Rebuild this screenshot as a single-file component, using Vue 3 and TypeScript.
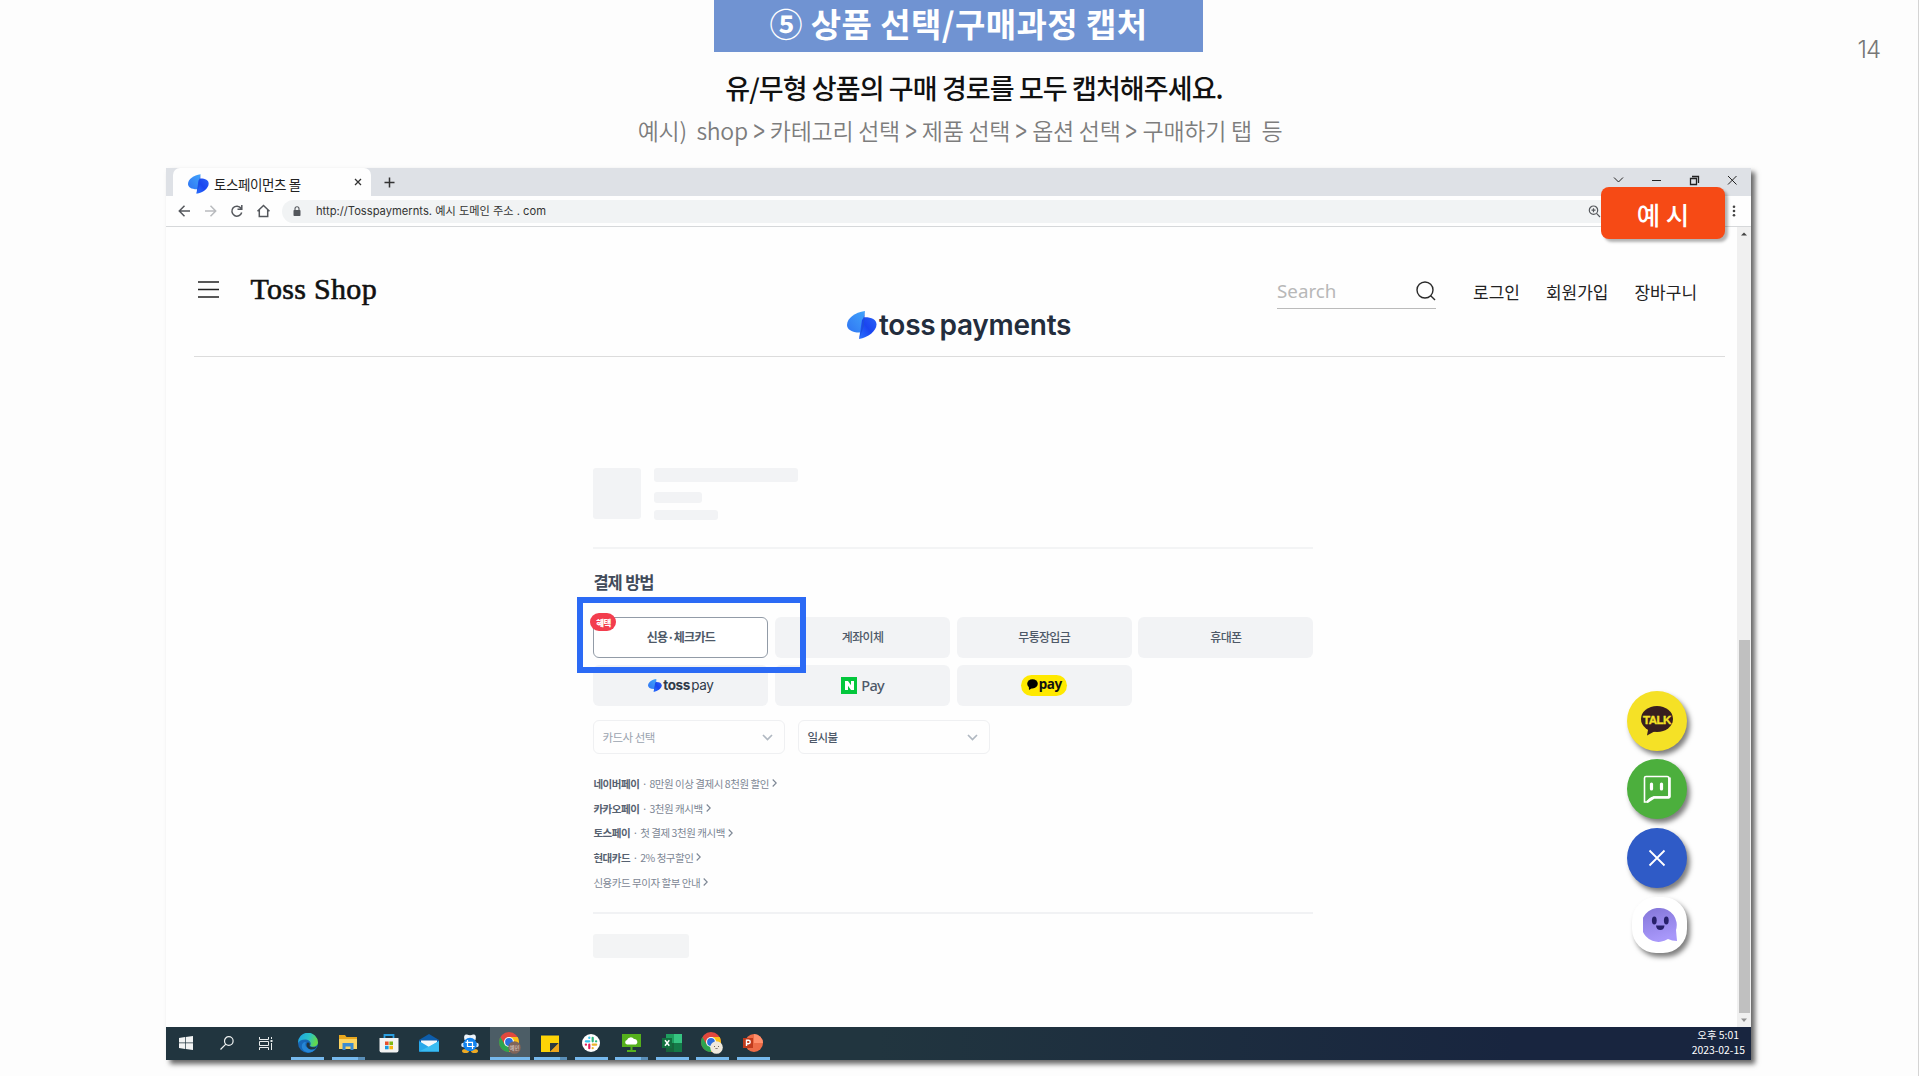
<script setup lang="ts">
interface Benefit {
  name: string
  text: string
}

interface TaskItem {
  id: string
  open?: boolean
  active?: boolean
  stacked?: boolean
}

const steps: string[] = ['카테고리 선택', '제품 선택', '옵션 선택', '구매하기 탭\u00a0 등']

const benefits: Benefit[] = [
  { name: '네이버페이', text: '8만원 이상 결제시 8천원 할인' },
  { name: '카카오페이', text: '3천원 캐시백' },
  { name: '토스페이', text: '첫 결제 3천원 캐시백' },
  { name: '현대카드', text: '2% 청구할인' },
  { name: '', text: '신용카드 무이자 할부 안내' },
]

const tasks: TaskItem[] = [
  { id: 'start' },
  { id: 'search' },
  { id: 'view' },
  { id: 'edge', open: true },
  { id: 'folder', open: true, stacked: true },
  { id: 'store' },
  { id: 'mail' },
  { id: 'capture' },
  { id: 'chrome-active', open: true, active: true },
  { id: 'notes', open: true, stacked: true },
  { id: 'slack', open: true },
  { id: 'cloud', open: true, stacked: true },
  { id: 'excel', open: true },
  { id: 'chrome', open: true },
  { id: 'ppt', open: true },
]
</script>

<template>
  <div class="slide">
    <svg class="defs" width="0" height="0">
      <defs>
        <linearGradient id="tl" x1="1" y1="0" x2="0" y2="1">
          <stop offset="0" stop-color="#41a4fb" />
          <stop offset="1" stop-color="#2f74f3" />
        </linearGradient>
        <linearGradient id="tr" x1="1" y1="0" x2="0" y2="1">
          <stop offset="0" stop-color="#2a62f6" />
          <stop offset="0.5" stop-color="#1a45f0" />
          <stop offset="1" stop-color="#2b74ff" />
        </linearGradient>
        <linearGradient id="edgeA" x1="0" y1="0" x2="1" y2="0.3">
          <stop offset="0" stop-color="#1d9fe8" />
          <stop offset="0.6" stop-color="#2bc3c4" />
          <stop offset="1" stop-color="#62d84e" />
        </linearGradient>
        <linearGradient id="buddy" x1="0" y1="0" x2="0.3" y2="1">
          <stop offset="0" stop-color="#8375d8" />
          <stop offset="1" stop-color="#a898fa" />
        </linearGradient>
        <symbol id="toss" viewBox="0 0 30 28">
          <path d="M18 0 L14.5 21.5 C5 22 0 18.500 0 14 C0 7 8 1.500 18 0Z" fill="url(#tl)" />
          <path d="M17 6.300 C24 6 29.500 8.500 29.500 13.500 C29.500 20 21 26.500 12 28 L15 9Z" fill="url(#tr)" />
          <path d="M17.800 1 L12.300 27.500 L16.800 15Z" fill="#1c50dd" />
        </symbol>
        <symbol id="chromeball" viewBox="0 0 20 20">
          <circle cx="10" cy="10" r="10" fill="#e2483d" />
          <path d="M1.340 5 A10 10 0 0 0 10 20 L14.300 12.500 L5.700 12.500Z" fill="#2da44f" />
          <path d="M10 20 A10 10 0 0 0 18.660 5 L10 5 L14.300 12.500Z" fill="#fbc116" />
          <circle cx="10" cy="10" r="5" fill="#fff" />
          <circle cx="10" cy="10" r="3.900" fill="#2a6fdf" />
        </symbol>
      </defs>
    </svg>

    <header class="head">
      <h1 class="banner">⑤ 상품 선택/구매과정 캡처</h1>
      <p class="lead">유/무형 상품의 구매 경로를 모두 캡처해주세요.</p>
      <p class="path">예시)&nbsp; shop<template v-for="s in steps" :key="s"><span class="gt">&gt;</span>{{ s }}</template></p>
      <span class="page-no">14</span>
    </header>

    <section class="window">
      <div class="tabstrip">
        <div class="tab">
          <svg class="tab-logo" width="21" height="20"><use href="#toss" /></svg>
          <span class="tab-title">토스페이먼츠 몰</span>
          <svg class="tab-close" width="8" height="8" viewBox="0 0 8 8"><path d="M1 1 7 7M7 1 1 7" stroke="#333" stroke-width="1.300" /></svg>
        </div>
        <svg class="tab-plus" width="11" height="11" viewBox="0 0 11 11"><path d="M5.500 0.500V10.500M0.500 5.500H10.500" stroke="#333" stroke-width="1.500" /></svg>
        <svg class="win-ctl" width="126" height="12" viewBox="0 0 126 12" fill="none" stroke="#222">
          <path d="M1 3.500 5.500 8 10 3.500" />
          <path d="M39 6.500H48" />
          <path d="M77.500 4.500H83.500V10.500H77.500ZM79 2.500H85.500V9" stroke-width="1.300" />
          <path d="M115 2 123.500 10.500M123.500 2 115 10.500" />
        </svg>
      </div>

      <div class="toolbar">
        <svg class="nav-icons" width="92" height="14" viewBox="0 0 92 14" fill="none" stroke="#54575c" stroke-width="1.500">
          <path d="M12 7H1.500M6.500 1.800 1.300 7 6.500 12.200" />
          <path d="M27 7H37.500M32.500 1.800 37.700 7 32.500 12.200" stroke="#b9bbbe" />
          <path d="M63 4.300A5 5 0 1 0 63.700 8.500M63.800 1V5.300H59.500" />
          <path d="M79.500 7.300 85.500 1.500 91.500 7.300M81.300 6V12.500H89.700V6" />
        </svg>
        <div class="address">
          <svg width="8" height="10" viewBox="0 0 8 10"><rect x="0.500" y="4" width="7" height="6" rx="0.800" fill="#54575c" /><path d="M2 4.500V2.800A2 2 0 0 1 6 2.800V4.500" fill="none" stroke="#54575c" stroke-width="1.100" /></svg>
          <span class="url">http://Tosspaymernts. 예시 도메인 주소 . com</span>
          <svg class="zoomer" width="13" height="13" viewBox="0 0 13 13" fill="none" stroke="#55585c" stroke-width="1.200"><circle cx="5.500" cy="5.200" r="4.200" /><path d="M8.500 8.300 12 12M3.500 5.200H7.500M5.500 3.200V7.200" /></svg>
        </div>
        <svg width="4" height="12" viewBox="0 0 4 12" fill="#444"><circle cx="2" cy="1.700" r="1.300" /><circle cx="2" cy="6" r="1.300" /><circle cx="2" cy="10.300" r="1.300" /></svg>
      </div>

      <div class="viewport">
        <main class="content">
          <nav class="shopbar">
            <svg width="21" height="17" viewBox="0 0 21 17" stroke="#222" stroke-width="1.700"><path d="M0 1H21M0 8.500H21M0 16H21" /></svg>
            <span class="shop">Toss Shop</span>
            <div class="brand">
              <svg width="30" height="28"><use href="#toss" /></svg>
              <span class="brand-toss">toss</span><span class="brand-pay">payments</span>
            </div>
            <div class="search">
              <span>Search</span>
              <svg width="20" height="20" viewBox="0 0 20 20" fill="none" stroke="#2a2a2a" stroke-width="1.400"><circle cx="9" cy="9" r="8" /><path d="M14.700 14.700 19 19" /></svg>
            </div>
            <a class="m1">로그인</a><a class="m2">회원가입</a><a>장바구니</a>
          </nav>

          <div class="checkout">
            <div class="product">
              <i class="thumb"></i>
              <div class="bars"><i class="b1"></i><i class="b2"></i><i class="b3"></i></div>
            </div>
            <h2>결제 방법</h2>
            <div class="methods">
              <div class="method selected">신용·체크카드<b class="deal">혜택</b></div>
              <div class="method">계좌이체</div>
              <div class="method">무통장입금</div>
              <div class="method">휴대폰</div>
              <div class="method">
                <svg width="14" height="13"><use href="#toss" /></svg>
                <span class="tp"><b>toss</b> pay</span>
              </div>
              <div class="method">
                <span class="naver"><svg width="9" height="9" viewBox="0 0 9 9"><path d="M0 0H3L6 4.300V0H9V9H6L3 4.700V9H0Z" fill="#fff" /></svg></span>
                <span class="np">Pay</span>
              </div>
              <div class="method">
                <span class="kakao"><svg width="11" height="11" viewBox="0 0 11 11"><ellipse cx="5.500" cy="4.800" rx="5.300" ry="4.600" /><path d="M1.800 7 2 11 6 8.500Z" /></svg>pay</span>
              </div>
              <div class="highlight"></div>
            </div>
            <div class="selects">
              <div class="select muted">카드사 선택<svg width="11" height="7" viewBox="0 0 11 7"><path d="M1 1 5.500 5.500 10 1" /></svg></div>
              <div class="select">일시불<svg width="11" height="7" viewBox="0 0 11 7"><path d="M1 1 5.500 5.500 10 1" /></svg></div>
            </div>
            <ul class="benefits">
              <li v-for="b in benefits" :key="b.text">
                <template v-if="b.name"><b>{{ b.name }}</b><em>·</em></template>{{ b.text }}<svg width="5" height="8" viewBox="0 0 5 8"><path d="M0.700 0.500 4.200 4 0.700 7.500" /></svg>
              </li>
            </ul>
            <div class="foot"><i></i></div>
          </div>
        </main>
        <div class="scroll">
          <svg width="14" height="12" viewBox="0 0 14 12"><path d="M4 8.500 7 5.500 10 8.500Z" fill="#444" /></svg>
          <i></i>
          <svg width="14" height="14" viewBox="0 0 14 14"><path d="M4 5.500H10L7 9Z" fill="#909090" /></svg>
        </div>
      </div>

      <footer class="taskbar">
        <div v-for="t in tasks" :key="t.id" class="task" :class="{ open: t.open, active: t.active, stacked: t.stacked }">
          <svg v-if="t.id === 'start'" width="14" height="14" viewBox="0 0 14 14" fill="#f2f4f4"><path d="M0 2 6 1.100V6.600H0ZM6.700 1 14 0V6.600H6.700ZM0 7.300H6V12.900L0 12ZM6.700 7.300H14V14L6.700 13Z" /></svg>
          <svg v-else-if="t.id === 'search'" width="14" height="14" viewBox="0 0 14 14" fill="none" stroke="#eef1f1" stroke-width="1.200"><circle cx="8.800" cy="5" r="4.300" /><path d="M5.800 8.200 0.500 13.500" /></svg>
          <svg v-else-if="t.id === 'view'" class="nudge" width="14" height="13" viewBox="0 0 14 13" fill="none" stroke="#e8ecec"><path d="M0.500 0V2.500H9.500V0M0.500 13V10.500H9.500V13M0.500 4.500H9.500V8.500H0.500ZM12.500 0V2M12.500 6V13" /><path d="M11.500 4H13.500" stroke-width="2" /></svg>
          <svg v-else-if="t.id === 'edge'" width="20" height="20" viewBox="0 0 20 20"><circle cx="10" cy="10" r="10" fill="#1768b8" /><path d="M0 10A10 10 0 0 1 20 9.500C20 13.500 15 14.500 12 13C14 10.500 12 7 8 6.500C4 6.200 1 8 0 10Z" fill="url(#edgeA)" /><path d="M8 9C6 12 8 17 17 16.500C14 20.500 7 20.500 4.500 16C2.500 12 5 8.500 8 9Z" fill="#2586d6" /><path d="M9.500 9.500C12 9 12 11.500 11.500 13.200C14 15 18 14.500 19 12.800C18 16 15 17 12.500 16.500C8.500 15.500 7.500 11.500 9.500 9.500Z" fill="#21353f" /></svg>
          <svg v-else-if="t.id === 'folder'" width="18" height="16" viewBox="0 0 18 16"><path d="M0 0H6L7.500 2H18V14H0Z" fill="#e9a81e" /><path d="M0 4H18V14H0Z" fill="#fcd462" /><path d="M3.500 15V8H14.500V15H11.500V11.500H6.500V15Z" fill="#3c8bd0" /></svg>
          <svg v-else-if="t.id === 'store'" width="20" height="19" viewBox="0 0 20 19"><path d="M5.500 5V1H14.500V5" fill="none" stroke="#2a9fe0" stroke-width="1.800" /><path d="M0.500 4H19.500V16.500Q19.500 18.500 17.500 18.500H2.500Q0.500 18.500 0.500 16.500Z" fill="#f3f3f3" /><path d="M6 7.500H9.600V11H6Z" fill="#e8502b" /><path d="M10.400 7.500H14V11H10.400Z" fill="#7eb813" /><path d="M6 11.800H9.600V15.300H6Z" fill="#1b9be2" /><path d="M10.400 11.800H14V15.300H10.400Z" fill="#f8b510" /></svg>
          <svg v-else-if="t.id === 'mail'" width="20" height="18" viewBox="0 0 20 18"><path d="M0 6 10 0 20 6V17.500H0Z" fill="#0d5dab" /><path d="M2 6.500H18V13H2Z" fill="#f4f8fb" /><path d="M0 7 10 13 20 7V17.500H0Z" fill="#28a8ea" /><path d="M0 17.500 10 12.500 20 7V17.500Z" fill="#39bdf3" /></svg>
          <svg v-else-if="t.id === 'capture'" width="18" height="19" viewBox="0 0 18 19"><path d="M3.500 6Q2 0 6 0.500Q9 2 12 0.500Q16 0 14.500 6Z" fill="#eef4fa" /><circle cx="2.500" cy="11" r="2.300" fill="#d8e6f2" /><circle cx="15.500" cy="11" r="2.300" fill="#d8e6f2" /><ellipse cx="4.500" cy="17" rx="3.500" ry="2" fill="#eea922" /><ellipse cx="13.500" cy="17" rx="3.500" ry="2" fill="#eea922" /><circle cx="9" cy="10.500" r="6.800" fill="#1183ee" /><path d="M6.500 6V12.500H13.500M4.500 8.300H11.500V15" fill="none" stroke="#fff" stroke-width="1.200" /></svg>
          <svg v-else-if="t.id === 'chrome-active'" width="22" height="22" viewBox="0 0 22 22"><use href="#chromeball" width="20" height="20" /><circle cx="15.500" cy="15.500" r="6.300" fill="#80655a" /><text x="15.500" y="17.600" text-anchor="middle" class="mini">예민</text></svg>
          <svg v-else-if="t.id === 'notes'" width="18" height="18" viewBox="0 0 18 18"><path d="M0 0H18V18H0Z" fill="#fdd306" /><path d="M0 0H18V1.500H0Z" fill="#152e49" /><path d="M9 18V9H18Z" fill="#2b3940" /><path d="M9 18 18 9V18Z" fill="#efa51c" /></svg>
          <svg v-else-if="t.id === 'slack'" width="18" height="18" viewBox="0 0 18 18"><circle cx="9" cy="9" r="9" fill="#fff" /><g fill="none" stroke-width="2.200" stroke-linecap="round"><path d="M3.800 7.300H7.300" stroke="#36c5f0" /><path d="M7.300 3.500V4" stroke="#36c5f0" /><path d="M10.700 3.800V7.300" stroke="#2eb67d" /><path d="M14 7.300H14.200" stroke="#2eb67d" /><path d="M10.700 10.700H14.200" stroke="#ecb22e" /><path d="M10.700 14V14.200" stroke="#ecb22e" /><path d="M7.300 10.700V14.200" stroke="#e01e5a" /><path d="M3.800 10.700H4" stroke="#e01e5a" /></g></svg>
          <svg v-else-if="t.id === 'cloud'" width="19" height="18" viewBox="0 0 19 18"><path d="M0 0H19V13H0ZM8.500 13H10.500V16H14V18H5V16H8.500Z" fill="#55b01c" /><path d="M5 10.500A2.300 2.300 0 0 1 5 6A4 4 0 0 1 12 5A3 3 0 0 1 14 10.500Z" fill="#fff" /></svg>
          <svg v-else-if="t.id === 'excel'" width="20" height="18" viewBox="0 0 20 18"><path d="M4 0H20V18H4Z" fill="#1f9f60" /><path d="M12 0H20V9H12Z" fill="#36c481" /><path d="M4 9H12V18H4Z" fill="#17653c" /><path d="M12 9H20V18H12Z" fill="#157a48" /><path d="M0 4H10V14H0Z" fill="#12703f" /><path d="M3 6.300 7.300 11.700M7.300 6.300 3 11.700" stroke="#fff" stroke-width="1.500" /></svg>
          <svg v-else-if="t.id === 'chrome'" width="22" height="22" viewBox="0 0 22 22"><use href="#chromeball" width="20" height="20" /><circle cx="15.500" cy="15.500" r="6.300" fill="#efe9dd" /><path d="M13 14.500H14M17 14.500H18M14.500 16 15.500 17 16.500 16" fill="none" stroke="#6f665a" /></svg>
          <svg v-else width="20" height="18" viewBox="0 0 20 18"><circle cx="11" cy="9" r="9" fill="#ed6c47" /><path d="M11 0A9 9 0 0 1 20 9H11Z" fill="#ff8f6b" /><path d="M0 4H10V14H0Z" fill="#c13b1c" /><path d="M3.500 12V6.300H5.500A1.700 1.700 0 0 1 5.500 9.700H3.500" fill="none" stroke="#fff" stroke-width="1.400" /></svg>
        </div>
        <div class="clock"><span class="time">오후 5:01</span><span>2023-02-15</span></div>
      </footer>

      <div class="sample">예 시</div>

      <div class="floats">
        <div class="fab talk"><svg width="40" height="30" viewBox="-4 0 40 30"><ellipse cx="16" cy="13" rx="16" ry="13" fill="#381e1f" /><path d="M7.500 21 6 29.500 16 24Z" fill="#381e1f" /><text x="16" y="17.500" text-anchor="middle" class="talk-text">TALK</text></svg></div>
        <div class="fab chat"><svg width="28" height="29" viewBox="0 0 28 29" fill="none" stroke="#fff"><path d="M3 1.500H24Q26 1.500 26 3.500V20Q26 22 24 22H11Q6 23 4.500 27H1.500V3Q1.500 1.500 3 1.500Z" stroke-width="1.600" /><path d="M26.500 2.500V21.500Q26.500 22.500 24 22.500H11L4 27" stroke-width="2.600" /><path d="M8.500 9V14M18.500 9V14" stroke-width="3.200" stroke-linecap="round" /></svg></div>
        <div class="fab close"><svg width="18" height="18" viewBox="0 0 18 18"><path d="M1.500 1.500 16.500 16.500M16.500 1.500 1.500 16.500" stroke="#fff" stroke-width="1.800" /></svg></div>
        <div class="fab buddy"><svg width="34" height="34" viewBox="0 0 34 34"><path d="M17 0A17 17 0 0 1 33 22L34 33Q29 33 25 31A17 17 0 1 1 17 0Z" fill="url(#buddy)" /><ellipse cx="11.300" cy="12.500" rx="2.400" ry="4" fill="#27206b" /><ellipse cx="23.300" cy="12.500" rx="2.400" ry="4" fill="#27206b" /><path d="M13 17.500H21.500Q21 22 17.300 22Q13.500 22 13 17.500Z" fill="#27206b" /></svg></div>
      </div>
    </section>
  </div>
</template>

<style>
body {
  background: #fdfdfd;
}
</style>

<style scoped>
* {
  box-sizing: border-box;
  margin: 0;
  padding: 0;
}
.slide {
  position: relative;
  width: 1919px;
  height: 1076px;
  overflow: hidden;
  background: #fdfdfd;
  border-right: 1px solid #d4d4d4;
  font-family: "Noto Sans CJK KR", sans-serif;
  color: #111;
  white-space: nowrap;
}
.defs {
  position: absolute;
}
svg {
  flex: none;
  display: block;
}
i {
  display: block;
}
.head {
  height: 168px;
  display: flex;
  flex-direction: column;
  align-items: center;
}
.banner {
  width: 489px;
  height: 52px;
  margin-right: 1px;
  background: #7093d2;
  color: #fff;
  font-size: 33px;
  font-weight: 700;
  letter-spacing: 0.4px;
  line-height: 47px;
  text-align: center;
}
.lead {
  margin-top: 16px;
  margin-left: 30px;
  height: 40px;
  line-height: 40px;
  font-size: 27px;
  font-weight: 500;
  letter-spacing: -0.9px;
}
.path {
  height: 46px;
  margin-left: 2px;
  line-height: 45px;
  font-size: 23px;
  font-weight: 350;
  letter-spacing: -0.28px;
  color: #7d7d7d;
}
.gt {
  display: inline-block;
  margin: 0 4.800px;
  transform: scale(0.9, 1.4);
  transform-origin: 50% 54%;
}
.page-no {
  position: absolute;
  right: 38px;
  top: 35px;
  font: 300 24px/30px Inter, sans-serif;
  letter-spacing: -1px;
  color: #777;
}
.window {
  position: relative;
  width: 1585px;
  height: 892px;
  margin-left: 166px;
  background: #fefefe;
  box-shadow: 4px 4px 5px rgba(0, 0, 0, 0.6);
  display: flex;
  flex-direction: column;
}
.tabstrip {
  height: 28px;
  background: #dee1e6;
  display: flex;
  align-items: center;
  padding-left: 7px;
}
.tab {
  width: 198px;
  height: 28px;
  border-radius: 7px 7px 0 0;
  background: #fefefe;
  display: flex;
  align-items: center;
  padding: 4px 9px 0 14px;
}
.tab-logo {
  margin-left: 1px;
}
.tab-title {
  flex: 1;
  margin-left: 5px;
  margin-top: -1px;
  font-size: 13.5px;
  line-height: 20px;
  letter-spacing: -0.4px;
  color: #222;
}
.tab-close {
  margin-top: -4px;
}
.tab-plus {
  margin-left: 13px;
}
.win-ctl {
  margin-left: auto;
  margin-right: 12px;
  margin-top: -5px;
}
.toolbar {
  height: 31px;
  border-bottom: 1px solid #d6d8da;
  display: flex;
  align-items: center;
  padding: 0 15px 0 12px;
}
.address {
  flex: 1;
  height: 23px;
  margin: 0 12px 0 12px;
  padding: 0 119px 0 11px;
  border-radius: 12px;
  background: #f1f3f4;
  display: flex;
  align-items: center;
}
.url {
  margin-left: 15px;
  font: 11.200px/20px "Inter", "Noto Sans CJK KR", sans-serif;
  color: #333;
}
.zoomer {
  margin-left: auto;
}
.viewport {
  flex: 1;
  display: flex;
}
.content {
  flex: 1;
  padding: 0 12.500px 0 27.500px;
}
.shopbar {
  height: 130px;
  border-bottom: 1px solid #dcdcdc;
  display: flex;
  align-items: flex-start;
  padding: 54px 26px 0 4.500px;
}
.shop {
  width: 129px;
  margin-left: 31.500px;
  margin-top: -10px;
  font: 30px/36px "Liberation Serif", serif;
  letter-spacing: 0.300px;
  -webkit-text-stroke: 0.6px #111;
}
.brand {
  display: flex;
  align-items: center;
  margin: 30px 0 0 467.500px;
  width: 226px;
  height: 28px;
  font: 600 28px/28px Inter, sans-serif;
  letter-spacing: -0.25px;
  color: #232d3d;
}
.brand-toss {
  margin-left: 2px;
}
.brand-pay {
  margin-left: 4px;
}
.search {
  width: 159px;
  height: 28px;
  margin-left: 204px;
  border-bottom: 1px solid #bbb;
  display: flex;
  justify-content: space-between;
  font: 18.800px/20px "Noto Sans", sans-serif;
  color: #b8b8b8;
}
.shopbar a {
  font-size: 17px;
  line-height: 22px;
  color: #222;
  margin-left: 26px;
}
.shopbar .m1 {
  margin-left: 37px;
}
.checkout {
  width: 720px;
  margin: 111px 0 0 399.900px;
  color: #4e5968;
  display: flex;
  flex-direction: column;
}
.product {
  height: 81px;
  border-bottom: 2px solid #f3f4f5;
  display: flex;
}
.product i {
  background: #f2f3f5;
  border-radius: 3px;
}
.thumb {
  width: 48px;
  height: 51px;
}
.bars {
  margin-left: 13px;
}
.b1 {
  width: 144px;
  height: 14px;
}
.b2 {
  width: 48px;
  height: 11px;
  margin-top: 10px;
}
.b3 {
  width: 64px;
  height: 10px;
  margin-top: 7px;
}
h2 {
  height: 26px;
  margin-top: 20px;
  font-size: 16.500px;
  line-height: 26px;
  letter-spacing: -1.1px;
  word-spacing: 1px;
  color: #414b5a;
}
.methods {
  position: relative;
  display: grid;
  grid-template-columns: repeat(4, 175px);
  grid-auto-rows: 41px;
  justify-content: space-between;
  row-gap: 7.500px;
  margin-top: 21.500px;
}
.method {
  position: relative;
  display: flex;
  align-items: center;
  justify-content: center;
  padding-bottom: 1px;
  background: #f2f3f5;
  border-radius: 6px;
  font-size: 12px;
  font-weight: 500;
  letter-spacing: -0.7px;
}
.selected {
  background: #fff;
  border: 1.500px solid #929ba7;
  font-weight: 700;
}
.deal {
  position: absolute;
  left: -4px;
  top: -5px;
  width: 26px;
  height: 18px;
  border-radius: 9px;
  background: #f33d4e;
  color: #fff;
  font-size: 8.500px;
  line-height: 18px;
  text-align: center;
}
.highlight {
  position: absolute;
  left: -16.400px;
  top: -19.500px;
  width: 229px;
  height: 76px;
  border: 6px solid #2b6af5;
}
.tp {
  margin-left: 1px;
  font: 400 13.500px/16px Inter, sans-serif;
  letter-spacing: -0.4px;
  color: #303a49;
}
.tp b {
  font-weight: 700;
  margin-right: -2px;
}
.naver {
  width: 16px;
  height: 17px;
  background: #03c73c;
  display: flex;
  align-items: center;
  justify-content: center;
}
.np {
  margin-left: 4px;
  font: 500 14.500px/17px "Noto Sans", sans-serif;
  letter-spacing: -0.8px;
}
.kakao {
  width: 46px;
  height: 21px;
  border-radius: 11px;
  background: #ffe900;
  color: #111;
  display: flex;
  align-items: center;
  justify-content: center;
  font: 700 13.500px/18px "Noto Sans", sans-serif;
  letter-spacing: -0.5px;
  padding-bottom: 3px;
}
.kakao svg {
  margin: 2px 1px 0 0;
}
.selects {
  display: flex;
  gap: 13px;
  margin-top: 14px;
}
.select {
  width: 192px;
  height: 34px;
  border: 1.500px solid #eff0f2;
  border-radius: 6px;
  padding: 0 11px 0 8px;
  display: flex;
  align-items: center;
  justify-content: space-between;
  font-size: 11.500px;
  font-weight: 500;
  letter-spacing: -0.5px;
}
.select.muted {
  color: #9aa3af;
  font-weight: 400;
}
.select svg {
  fill: none;
  stroke: #b0b8c1;
  stroke-width: 1.700;
}
.benefits {
  list-style: none;
  margin-top: 17px;
  font-size: 10.500px;
  letter-spacing: -0.460px;
  color: #7c8694;
}
.benefits li {
  height: 24.700px;
  display: flex;
  align-items: center;
}
.benefits b {
  color: #566170;
}
.benefits em {
  width: 10px;
  text-align: center;
  font-style: normal;
}
.benefits svg {
  margin-left: 3px;
  fill: none;
  stroke: #7c8694;
  stroke-width: 1.100;
}
.foot {
  margin-top: 17.500px;
  border-top: 2px solid #f1f2f4;
  padding-top: 20px;
}
.foot i {
  width: 96px;
  height: 24px;
  border-radius: 3px;
  background: #f3f4f5;
}
.scroll {
  width: 14px;
  display: flex;
  flex-direction: column;
  background: #f0f0f0;
}
.scroll i {
  width: 11px;
  flex: 1;
  margin: 401px 0 0 2px;
  background: #c0c0c0;
}
.taskbar {
  height: 33px;
  display: flex;
  background: linear-gradient(90deg, #21353f 0%, #21353f 45%, #18253f 85%);
}
.task {
  position: relative;
  width: 40.480px;
  padding-bottom: 1px;
  display: flex;
  align-items: center;
  justify-content: center;
}
.task.active {
  background: #4c5d66;
}
.nudge {
  margin-left: -2px;
}
.task.open::after {
  content: "";
  position: absolute;
  left: 4px;
  bottom: 0;
  width: 33px;
  height: 3px;
  background: #76b9ed;
}
.task.active::after {
  left: 0;
  width: 40px;
}
.task.stacked::after {
  background: linear-gradient(90deg, #76b9ed 26px, #5a8fb8 26px);
}
.mini {
  font-size: 5.500px;
  fill: #e8dcd4;
}
.clock {
  margin-left: auto;
  padding: 0 6px 0 0;
  display: flex;
  flex-direction: column;
  align-items: flex-end;
  font-size: 10.400px;
  line-height: 15px;
  color: #fff;
}
.time {
  margin-right: 6px;
}
.sample {
  position: absolute;
  left: 1435px;
  top: 19px;
  width: 124px;
  height: 52px;
  border-radius: 8px;
  background: #f64a15;
  box-shadow: 3px 3px 3px rgba(0, 0, 0, 0.3);
  color: #fff;
  font-size: 25.500px;
  font-weight: 500;
  line-height: 54px;
  text-align: center;
}
.floats {
  position: absolute;
  left: 1460.500px;
  top: 522.500px;
  display: flex;
  flex-direction: column;
  gap: 8.500px;
}
.fab {
  width: 60px;
  height: 60px;
  border-radius: 50%;
  display: flex;
  align-items: center;
  justify-content: center;
  box-shadow: 3px 4px 5px rgba(0, 0, 0, 0.5);
}
.talk {
  background: #f5e126;
}
.talk-text {
  font: 700 11.500px "Liberation Sans", sans-serif;
  letter-spacing: -0.5px;
  fill: #f5e126;
  stroke: #f5e126;
  stroke-width: 0.4px;
}
.chat {
  background: #4caf3d;
}
.close {
  background: #2f5bc7;
}
.buddy {
  width: 55px;
  height: 56px;
  margin: 1px 0 0 5.500px;
  border-radius: 24px;
  background: #fff;
}
</style>
